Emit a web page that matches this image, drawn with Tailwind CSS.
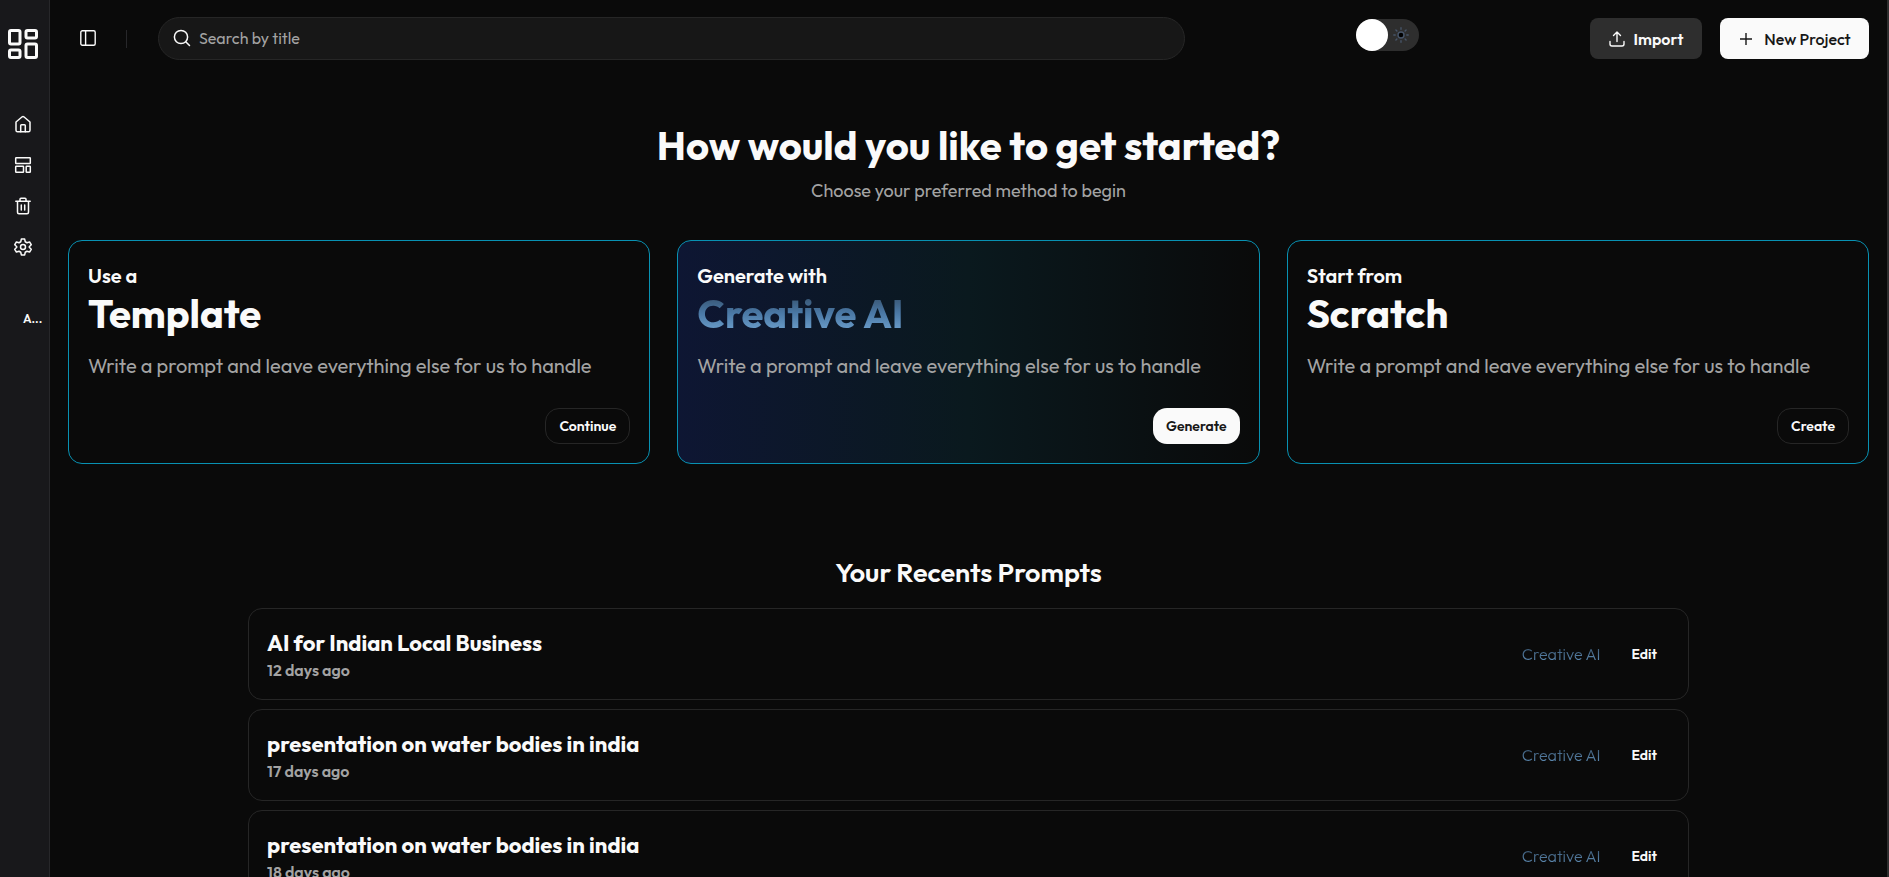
<!DOCTYPE html>
<html lang="en">
<head>
<meta charset="utf-8">
<title>Projects</title>
<script src="https://cdn.jsdelivr.net/npm/@tailwindcss/browser@4"></script>
</head>
<body class="flex h-screen overflow-hidden bg-[#0a0a0a] font-[Outfit,Lato,sans-serif] text-[#fafafa]">
  <aside class="flex w-[50px] shrink-0 flex-col border-r border-[#27272a] bg-[#18181b]">
    <a href="#" aria-label="Dashboard" class="mt-[26px] ml-[5px]">
      <svg class="size-9" viewBox="0 0 24 24" fill="none" stroke="currentColor" stroke-width="2" stroke-linecap="round" stroke-linejoin="round"><rect x="3" y="3" width="7" height="9" rx="1"/><rect x="14" y="3" width="7" height="5" rx="1"/><rect x="14" y="12" width="7" height="9" rx="1"/><rect x="3" y="16" width="7" height="5" rx="1"/></svg>
    </a>
    <nav class="mt-[52px] flex flex-col gap-[21px] pl-[13px]">
      <a href="#" aria-label="Home"><svg class="size-5" viewBox="0 0 20 20" fill="none" stroke="currentColor" stroke-width="1.5" stroke-linecap="round" stroke-linejoin="round"><path d="M3 8 9.200 2.800q.8-.6 1.600 0L17 8v8.200a1.600 1.600 0 0 1-1.600 1.600H4.600A1.600 1.600 0 0 1 3 16.200z"/><path d="M7.700 17.800v-6.300q0-.8.8-.8h3q.8 0 .8.8v6.300"/></svg></a>
      <a href="#" aria-label="Templates"><svg class="size-5" viewBox="0 0 20 20" fill="none" stroke="currentColor" stroke-width="1.5" stroke-linejoin="round"><rect x="2.700" y="2.700" width="14.600" height="5.800" rx=".5"/><rect x="2.700" y="11.300" width="7.800" height="6" rx=".5"/><rect x="13.200" y="11.300" width="4.100" height="6" rx=".5"/></svg></a>
      <a href="#" aria-label="Trash"><svg class="size-5" viewBox="0 0 20 20" fill="none" stroke="currentColor" stroke-width="1.5" stroke-linecap="round" stroke-linejoin="round"><path d="M2.800 5.200h14.400M4.500 5.200v11c0 .9.600 1.500 1.500 1.500h8c.9 0 1.500-.6 1.500-1.500v-11M7 5.200V3.200c0-.6.400-1 1-1h4c.6 0 1 .4 1 1v2M8.300 9v5M11.700 9v5"/></svg></a>
      <a href="#" aria-label="Settings"><svg class="size-5" viewBox="0 0 24 24" fill="none" stroke="currentColor" stroke-width="1.800" stroke-linejoin="round"><path d="M10 2.500h4l.7 3.200 2 1.200 3.200-1 2 3.400-2.400 2.300v.8l2.400 2.300-2 3.400-3.200-1-2 1.200-.7 3.200h-4l-.7-3.200-2-1.200-3.200 1-2-3.400 2.400-2.300v-.8L2.100 9.300l2-3.400 3.200 1 2-1.200z"/><circle cx="12" cy="12" r="3"/></svg></a>
    </nav>
    <span class="mt-[52px] ml-[23px] text-xs leading-5 font-semibold">A...</span>
  </aside>

  <div class="flex min-w-0 flex-1 flex-col border-r-2 border-[#2e2e2e] px-[18px]">
    <header class="flex items-center pt-[17px]">
      <button aria-label="Toggle sidebar" class="mb-px ml-3"><svg class="size-4" viewBox="0 0 16 16" fill="none" stroke="currentColor" stroke-width="1.400"><rect x=".8" y=".8" width="14.400" height="14.400" rx="1.500"/><path d="M5.600.8v14.400"/></svg></button>
      <div class="ml-[30px] h-[18px] w-px bg-[#27272a]"></div>
      <label class="ml-[31px] flex h-[43px] w-[1027px] items-center gap-2 rounded-full border border-[#262626] bg-[#171717] px-[14px] pb-0.5">
        <svg class="size-[18px]" viewBox="0 0 18 18" fill="none" stroke="currentColor" stroke-width="1.500" stroke-linecap="round"><circle cx="8" cy="8" r="6.600"/><path d="m13 13 3.500 3.500"/></svg>
        <input type="text" placeholder="Search by title" aria-label="Search by title" class="min-w-0 flex-1 bg-transparent text-base outline-none placeholder:text-[#a3a3a3]">
      </label>
      <button role="switch" aria-checked="false" aria-label="Dark mode" class="mb-2 ml-auto flex h-8 w-[63px] items-center gap-[5px] rounded-full bg-[#2e2e2e]">
        <span class="size-8 rounded-full bg-white"></span>
        <svg class="size-4" viewBox="0 0 16 16" stroke="#475569" stroke-width="1.400" stroke-linecap="round"><circle cx="8" cy="8" r="3" fill="#000"/><path d="M8 .8v1.400M8 13.800v1.400M.8 8h1.400M13.800 8h1.400M2.900 2.900l1 1M12.100 12.100l1 1M2.900 13.100l1-1M12.100 3.900l1-1"/></svg>
      </button>
      <button class="ml-[171px] flex h-[41px] w-28 items-center justify-center gap-[9px] rounded-lg bg-[#2e2e2e] text-base font-semibold"><svg class="size-4" viewBox="0 0 16 16" fill="none" stroke="currentColor" stroke-width="1.400" stroke-linecap="round" stroke-linejoin="round"><path d="M8 10.500V1M4.500 4.500 8 1l3.500 3.500M1 10.500V13c0 1.200.8 2 2 2h10c1.200 0 2-.8 2-2v-2.500"/></svg>Import</button>
      <button class="ml-[18px] flex h-[41px] w-[149px] items-center justify-center gap-3 rounded-lg bg-[#fafafa] pl-0.5 text-base font-medium text-[#171717]"><svg class="size-3" viewBox="0 0 12 12" stroke="currentColor" stroke-width="1.400"><path d="M6 0v12M0 6h12"/></svg>New Project</button>
    </header>

    <main>
      <div class="mt-[63px] text-center">
        <h1 class="text-[40px] leading-[45px] font-bold">How would you like to get started?</h1>
        <p class="mt-[9px] text-lg leading-7 text-[#a3a3a3]">Choose your preferred method to begin</p>
      </div>
      <section class="mt-[35px] grid grid-cols-3 gap-[27px]">
        <article class="flex h-[224px] flex-col rounded-[14px] border border-[#0891b2] px-[19px] pt-[21px] pb-[19px]">
          <h2><span class="block text-xl leading-7 font-semibold">Use a</span><span class="block text-[40px] leading-[46px] font-bold">Template</span></h2>
          <p class="mt-4 text-xl leading-7 text-[#a3a3a3]">Write a prompt and leave everything else for us to handle</p>
          <button class="mt-auto h-9 self-end rounded-[14px] border border-[#262626] px-[13px] text-sm font-semibold">Continue</button>
        </article>
        <article class="flex h-[224px] flex-col rounded-[14px] border border-[#0891b2] bg-linear-to-r/srgb from-[#0e1633] via-[#0a191e] to-[#0a0a0a] px-[19px] pt-[21px] pb-[19px]">
          <h2><span class="block text-xl leading-7 font-semibold">Generate with</span><span class="block bg-linear-to-b from-[#30475e] via-[#4a78a5] to-[#75a9d6] bg-clip-text text-[40px] leading-[46px] font-bold text-transparent">Creative AI</span></h2>
          <p class="mt-4 text-xl leading-7 text-[#a3a3a3]">Write a prompt and leave everything else for us to handle</p>
          <button class="mt-auto h-9 self-end rounded-[14px] bg-[#fafafa] px-[13px] text-sm font-semibold text-[#171717]">Generate</button>
        </article>
        <article class="flex h-[224px] flex-col rounded-[14px] border border-[#0891b2] px-[19px] pt-[21px] pb-[19px]">
          <h2><span class="block text-xl leading-7 font-semibold">Start from</span><span class="block text-[40px] leading-[46px] font-bold">Scratch</span></h2>
          <p class="mt-4 text-xl leading-7 text-[#a3a3a3]">Write a prompt and leave everything else for us to handle</p>
          <button class="mt-auto h-9 self-end rounded-[14px] border border-[#262626] px-[13px] text-sm font-semibold">Create</button>
        </article>
      </section>

      <section class="mx-auto mt-[92px] w-4/5">
        <h2 class="text-center text-[27px] leading-8 font-semibold">Your Recents Prompts</h2>
        <ul class="mt-5 flex flex-col gap-[9px]">
          <li class="flex h-[92px] items-center rounded-[14px] border border-[#262626] px-[18px]">
            <div class="flex-1 pt-[3px]"><h3 class="text-[22px] leading-7 font-bold">AI for Indian Local Business</h3><p class="text-base leading-[26px] font-semibold text-[#a3a3a3]">12 days ago</p></div>
            <span class="bg-linear-to-b from-[#30475e] to-[#6a9ecb] bg-clip-text text-base font-light text-transparent">Creative AI</span>
            <button class="ml-[18px] px-[13px] text-sm font-semibold">Edit</button>
          </li>
          <li class="flex h-[92px] items-center rounded-[14px] border border-[#262626] px-[18px]">
            <div class="flex-1 pt-[3px]"><h3 class="text-[22px] leading-7 font-bold">presentation on water bodies in india</h3><p class="text-base leading-[26px] font-semibold text-[#a3a3a3]">17 days ago</p></div>
            <span class="bg-linear-to-b from-[#30475e] to-[#6a9ecb] bg-clip-text text-base font-light text-transparent">Creative AI</span>
            <button class="ml-[18px] px-[13px] text-sm font-semibold">Edit</button>
          </li>
          <li class="flex h-[92px] items-center rounded-[14px] border border-[#262626] px-[18px]">
            <div class="flex-1 pt-[3px]"><h3 class="text-[22px] leading-7 font-bold">presentation on water bodies in india</h3><p class="text-base leading-[26px] font-semibold text-[#a3a3a3]">18 days ago</p></div>
            <span class="bg-linear-to-b from-[#30475e] to-[#6a9ecb] bg-clip-text text-base font-light text-transparent">Creative AI</span>
            <button class="ml-[18px] px-[13px] text-sm font-semibold">Edit</button>
          </li>
        </ul>
      </section>
    </main>
  </div>
</body>
</html>
